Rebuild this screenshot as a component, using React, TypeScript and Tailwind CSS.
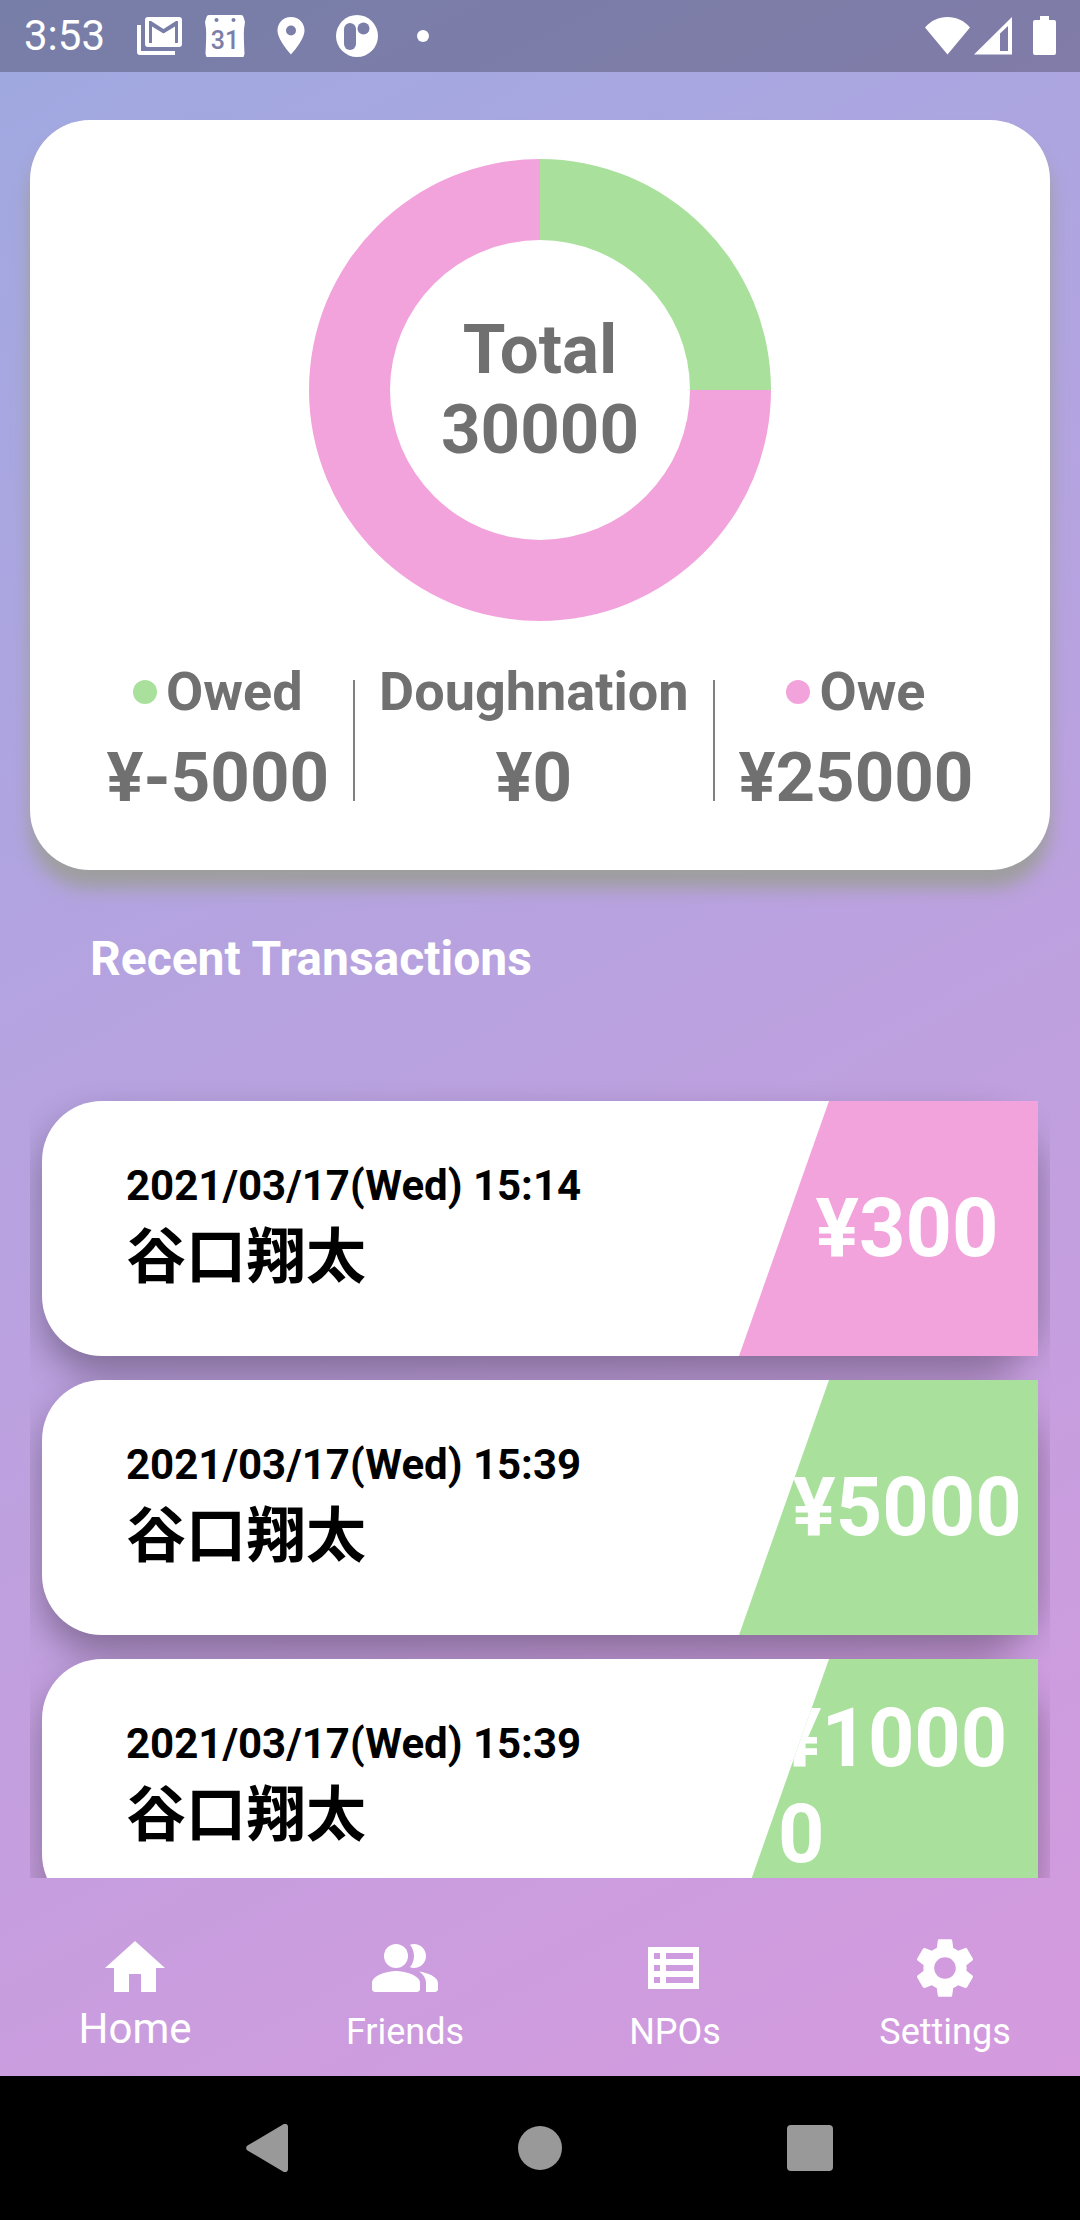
import React from "react";
import { MdSettings } from "react-icons/md";

type Tone = "owe" | "owed";

const transactions: { date: string; name: string; amount: string; tone: Tone }[] = [
  { date: "2021/03/17(Wed) 15:14", name: "谷口翔太", amount: "¥300", tone: "owe" },
  { date: "2021/03/17(Wed) 15:39", name: "谷口翔太", amount: "¥5000", tone: "owed" },
  { date: "2021/03/17(Wed) 15:39", name: "谷口翔太", amount: "¥10000", tone: "owed" },
];

const toneClass: Record<Tone, string> = {
  owe: "bg-[#f2a3dc]",
  owed: "bg-[#a9e19c]",
};

function StatusBar() {
  return (
    <header className="flex h-[72px] shrink-0 items-center justify-between bg-black/25 px-6 text-white">
      <div className="flex items-center gap-[18px]">
        <time className="mr-3 text-[42px] leading-[50px]">3:53</time>
        <svg className="size-12" viewBox="0 0 48 48" fill="currentColor" aria-label="Mail">
          <path d="M2 13h4v26h34v4H5a3 3 0 0 1-3-3z" />
          <path
            fillRule="evenodd"
            d="M13 5h31a3 3 0 0 1 3 3v24a3 3 0 0 1-3 3H13a3 3 0 0 1-3-3V8a3 3 0 0 1 3-3zM14 9v22h3V14.500l11.500 7L40 14.500V31h3V9h-2l-12.500 8L16 9z"
          />
        </svg>
        <svg className="size-12" viewBox="0 0 48 48" aria-label="Calendar">
          <path
            fill="#fff"
            d="M8 3h32q2 0 2.500 2l1.500 5-1 7q-.5 6 .5 25l-1 3H5.500l-1-3q1-19 .5-25L4 10l1.500-5q.5-2 2.500-2z"
          />
          <circle cx="15.500" cy="8" r="2" fill="#7b7ea9" />
          <circle cx="32.500" cy="8" r="2" fill="#7b7ea9" />
          <text x="24" y="37" textAnchor="middle" fill="#7b7ea9" className="text-[25px] font-medium">
            31
          </text>
        </svg>
        <svg className="size-12" viewBox="0 0 48 48" fill="currentColor" aria-label="Location">
          <path
            fillRule="evenodd"
            d="M24 5C16 5 10.500 11 10.500 18.500 10.500 28 24 42.500 24 42.500S37.500 28 37.500 18.500C37.500 11 32 5 24 5zm0 8.500a5 5 0 1 1 0 10 5 5 0 0 1 0-10z"
          />
        </svg>
        <svg className="size-12" viewBox="0 0 48 48" aria-label="App notification">
          <circle cx="24" cy="24" r="21" fill="#fff" />
          <rect x="11" y="11" width="12" height="27" rx="6" fill="#7b7ea9" />
          <circle cx="30.500" cy="16.500" r="6" fill="#7b7ea9" />
        </svg>
        <svg className="size-12" viewBox="0 0 48 48" fill="currentColor" aria-label="More notifications">
          <circle cx="24" cy="24" r="6" />
        </svg>
      </div>
      <div className="flex items-center">
        <svg className="h-12 w-12" viewBox="0 0 48 48" fill="currentColor" aria-label="Wi-Fi">
          <path d="M1 15.500C7 8.500 14.500 5 23.500 5S40 8.500 46 15.500L23.500 42.500z" />
        </svg>
        <svg className="h-12 w-[42px]" viewBox="0 0 42 48" fill="currentColor" aria-label="Signal">
          <path fillRule="evenodd" d="M2 42.500 40 5v37.500zM28 21.500V39h8V14z" />
        </svg>
        <svg className="ml-[18px] h-12 w-6" viewBox="0 0 24 48" fill="currentColor" aria-label="Battery">
          <path d="M8 4h9v4h5a2 2 0 0 1 2 2v31a2 2 0 0 1-2 2H3a2 2 0 0 1-2-2V10a2 2 0 0 1 2-2h5z" />
        </svg>
      </div>
    </header>
  );
}

function Donut() {
  return (
    <div className="grid place-items-center">
      <svg className="col-start-1 row-start-1 size-[462px]" viewBox="0 0 462 462" aria-hidden="true">
        <path d="M231 0A231 231 0 0 1 462 231H381A150 150 0 0 0 231 81z" fill="#a9e19c" />
        <path d="M462 231A231 231 0 1 1 231 0V81A150 150 0 1 0 381 231z" fill="#f2a3dc" />
      </svg>
      <p className="col-start-1 row-start-1 text-center text-[69px] leading-[80px] font-bold">
        Total
        <br />
        30000
      </p>
    </div>
  );
}

function Stat({ label, value, tone }: { label: string; value: string; tone?: Tone }) {
  return (
    <div className="flex flex-col items-center gap-3 font-bold">
      <dt className="flex items-center gap-[9px] text-[54px] leading-[64px]">
        {tone && <span className={`size-6 rounded-full ${toneClass[tone]}`} />}
        {label}
      </dt>
      <dd className="text-[69px] leading-[84px]">{value}</dd>
    </div>
  );
}

function Divider() {
  return <div className="h-[121px] w-0.5 bg-[#808080]" />;
}

function SummaryCard() {
  return (
    <section className="mx-[30px] mt-12 shrink-0 rounded-[60px] bg-white pt-[39px] pb-[50px] text-[#707070] shadow-[0_18px_18px_#9e9e9e]">
      <Donut />
      <dl className="mt-[39px] flex items-center justify-center gap-6">
        <Stat label="Owed" value="¥-5000" tone="owed" />
        <Divider />
        <Stat label="Doughnation" value="¥0" />
        <Divider />
        <Stat label="Owe" value="¥25000" tone="owe" />
      </dl>
    </section>
  );
}

function TransactionRow({ date, name, amount, tone }: (typeof transactions)[number]) {
  return (
    <li className="flex h-[255px] shrink-0 justify-between rounded-[60px] bg-white shadow-[0_18px_36px_rgba(0,0,0,0.32)]">
      <div className="pt-[60px] pl-[84px] text-black">
        <p className="text-[42px] leading-[49px] font-bold">{date}</p>
        <p className="text-[60px] leading-[96px] font-bold">{name}</p>
      </div>
      <div
        className={`flex w-[299px] items-center justify-end pr-0.5 [clip-path:polygon(90px_0,100%_0,100%_100%,0_100%)] ${toneClass[tone]}`}
      >
        <div className="flex w-[258px] justify-center">
          <span className="text-[81px] leading-[96px] font-bold break-all text-white">{amount}</span>
        </div>
      </div>
    </li>
  );
}

function HomeIcon() {
  return (
    <svg className="size-[72px]" viewBox="0 0 24 24" fill="currentColor" aria-hidden="true">
      <path d="M10 20v-6h4v6h5v-8h3L12 3 2 12h3v8z" />
    </svg>
  );
}

function FriendsIcon() {
  return (
    <svg className="size-[72px]" viewBox="0 0 24 24" fill="currentColor" aria-hidden="true">
      <circle cx="9" cy="8" r="4" />
      <path d="M9 13c-2.670 0-8 1.340-8 4v2c0 .55.45 1 1 1h14c.55 0 1-.45 1-1v-2c0-2.660-5.330-4-8-4z" />
      <path d="M15 12c2.210 0 4-1.790 4-4s-1.790-4-4-4c-.47 0-.91.1-1.330.24C14.500 5.270 15 6.580 15 8s-.5 2.730-1.330 3.760c.42.14.86.24 1.330.24z" />
      <path d="M16.670 13.130C18.040 14.060 19 15.320 19 17v3h3c.55 0 1-.45 1-1v-2c0-2.180-3.570-3.470-6.330-3.870z" />
    </svg>
  );
}

function ListIcon() {
  return (
    <svg className="size-[72px]" viewBox="0 0 24 24" fill="currentColor" aria-hidden="true">
      <path
        fillRule="evenodd"
        d="M3 5h17v14H3zM5 7v2h2V7zM5 11v2h2v-2zM5 15v2h2v-2zM9 7v2h9V7zM9 11v2h9v-2zM9 15v2h9v-2z"
      />
    </svg>
  );
}

const tabs = [
  { label: "Home", icon: <HomeIcon />, active: true },
  { label: "Friends", icon: <FriendsIcon />, active: false },
  { label: "NPOs", icon: <ListIcon />, active: false },
  { label: "Settings", icon: <MdSettings className="size-[72px]" aria-hidden="true" />, active: false },
];

function TabBar() {
  return (
    <nav className="grid h-[198px] shrink-0 grid-cols-4 pt-[54px] text-white">
      {tabs.map((tab) => (
        <a
          key={tab.label}
          href={`#${tab.label.toLowerCase()}`}
          aria-current={tab.active ? "page" : undefined}
          className="flex flex-col items-center"
        >
          {tab.icon}
          <span className={tab.active ? "text-[42px] leading-[50px]" : "text-[36px] leading-[56px]"}>
            {tab.label}
          </span>
        </a>
      ))}
    </nav>
  );
}

function SystemNav() {
  return (
    <div className="flex h-36 shrink-0 items-center justify-center gap-[222px] bg-black text-[#999999]">
      <button type="button" aria-label="Back">
        <svg className="size-12" viewBox="0 0 48 48" fill="currentColor">
          <path d="M1.500 21.500 37 .5a3 3 0 0 1 5 2.500v42a3 3 0 0 1-5 2.500L1.500 26.500a3 3 0 0 1 0-5z" />
        </svg>
      </button>
      <button type="button" aria-label="Home screen">
        <svg className="size-12" viewBox="0 0 48 48" fill="currentColor">
          <circle cx="24" cy="24" r="22" />
        </svg>
      </button>
      <button type="button" aria-label="Recent apps">
        <svg className="size-12" viewBox="0 0 48 48" fill="currentColor">
          <rect x="1" y="1" width="46" height="46" rx="4" />
        </svg>
      </button>
    </div>
  );
}

export default function App() {
  return (
    <div className="flex h-screen flex-col bg-black font-['Roboto','Noto_Sans_CJK_JP',sans-serif]">
      <div className="flex min-h-0 flex-1 flex-col bg-[linear-gradient(152.5deg,#9fa9e1,#d59ade)]">
        <StatusBar />
        <SummaryCard />
        <h1 className="mt-[61px] mb-[90px] shrink-0 px-[90px] text-[48px] leading-[56px] font-bold text-white">
          Recent Transactions
        </h1>
        <ul className="mx-[30px] flex min-h-0 flex-1 flex-col gap-6 overflow-y-auto px-3 pt-6 [scrollbar-width:none]">
          {transactions.map((item, index) => (
            <TransactionRow key={index} {...item} />
          ))}
        </ul>
        <TabBar />
      </div>
      <SystemNav />
    </div>
  );
}
